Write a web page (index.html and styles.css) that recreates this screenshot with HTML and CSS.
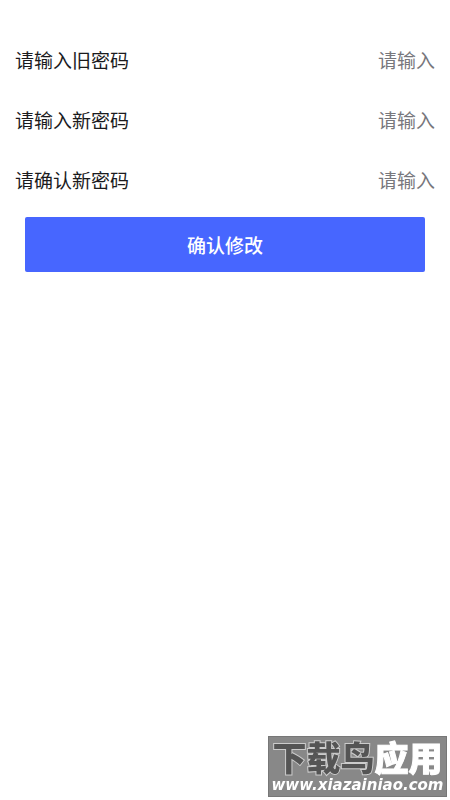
FILE: index.html
```html
<!DOCTYPE html>
<html lang="zh-CN">
<head>
<meta charset="utf-8">
<meta name="viewport" content="width=device-width, initial-scale=1">
<title>修改密码</title>
<link rel="stylesheet" href="styles.css">
</head>
<body>
<form class="form">
  <div class="row">
    <label for="old">请输入旧密码</label>
    <input id="old" type="password" placeholder="请输入">
  </div>
  <div class="row">
    <label for="new">请输入新密码</label>
    <input id="new" type="password" placeholder="请输入">
  </div>
  <div class="row">
    <label for="confirm">请确认新密码</label>
    <input id="confirm" type="password" placeholder="请输入">
  </div>
  <button class="submit" type="submit">确认修改</button>
</form>
<div class="watermark">
  <div class="brand"><span class="brand-dark">下载鸟</span><span class="brand-light">应用</span></div>
  <div class="site">www.xiazainiao.com</div>
</div>
</body>
</html>
```
FILE: styles.css
```css
* {
  box-sizing: border-box;
}

body {
  margin: 0;
  background: #fff;
  color: #1b1b1d;
  font-family: "Noto Sans CJK SC", sans-serif;
  font-size: 19px;
}

.form {
  padding: 29px 15px 0;
}

.row {
  display: flex;
  align-items: center;
  height: 60px;
}

.row label {
  flex: none;
}

.row input {
  flex: 1;
  min-width: 0;
  padding: 0;
  border: 0;
  outline: 0;
  background: none;
  color: inherit;
  font: inherit;
  text-align: right;
}

.row input::placeholder {
  color: #77777c;
  opacity: 1;
}

.submit {
  display: block;
  width: calc(100% - 20px);
  height: 55px;
  margin: 8px 10px 0;
  padding: 0;
  border: 0;
  border-radius: 2px;
  background: #4766ff;
  color: #fff;
  font: inherit;
  font-weight: 500;
}

.watermark {
  position: fixed;
  right: 3px;
  bottom: 3px;
  width: 179px;
  height: 61px;
  padding-top: 4px;
  border: 1px solid #777;
  background: #888;
  color: #fff;
  text-align: center;
  white-space: nowrap;
}

.brand {
  font-size: 34px;
  font-weight: 900;
  line-height: 32px;
}

.brand-dark {
  color: #555;
  -webkit-text-stroke: 2px #ccc;
  paint-order: stroke fill;
}

.brand-light {
  font-style: oblique 8deg;
  -webkit-text-stroke: 1px #fff;
}

.site {
  font-family: "DejaVu Sans", sans-serif;
  font-size: 15px;
  font-style: oblique;
  font-weight: 700;
  line-height: 24px;
}
```
